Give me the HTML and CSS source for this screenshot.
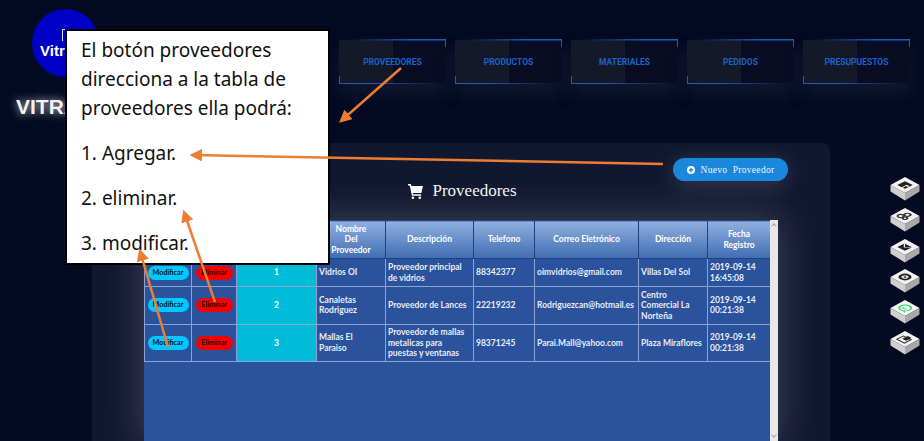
FILE: index.html
```html
<!DOCTYPE html>
<html lang="es">
<head>
    <meta charset="UTF-8">
    <meta name="viewport" content="width=device-width, initial-scale=1.0">
    <title>Proveedores</title>
    <link rel="stylesheet" href="styles.css">
</head>
<body>
    <header class="top">
      <div class="brand">
        <div class="logo"><span>Vitrales</span></div>
        <div class="brand-name">VITRALES</div>
      </div>
      <nav class="menu">
        <a class="menu-item">PROVEEDORES</a>
        <a class="menu-item">PRODUCTOS</a>
        <a class="menu-item">MATERIALES</a>
        <a class="menu-item">PEDIDOS</a>
        <a class="menu-item">PRESUPUESTOS</a>
      </nav>
    </header>

    <main class="content">
      <section class="panel">
        <button class="btn-new">
          <svg class="btn-icon" viewBox="0 0 10 10"><circle cx="5" cy="5" r="5" fill="#fff"/><path d="M5 2.2v5.6M2.2 5h5.6" stroke="#1a86dc" stroke-width="1.7"/></svg>
          Nuevo&nbsp; Proveedor
        </button>
        <h2 class="panel-title">
          <svg class="cart" viewBox="0 0 16 16"><path d="M0 0h3l.6 2H16l-1.8 7.5H5.2l.4 1.500H14v1.600H4.200L1.800 1.600H0z" fill="#fff"/><circle cx="5.200" cy="14.600" r="1.400" fill="#fff"/><circle cx="12.600" cy="14.600" r="1.400" fill="#fff"/></svg>
          Proveedores
        </h2>
        <div class="table-wrap">
          <table class="grid">
            <thead>
              <tr>
                <th class="c1"></th>
                <th class="c2"></th>
                <th class="c3">Id</th>
                <th class="c4">Nombre<br>Del<br>Proveedor</th>
                <th class="c5">Descripción</th>
                <th class="c6">Telefono</th>
                <th class="c7">Correo Eletrónico</th>
                <th class="c8">Dirección</th>
                <th class="c9">Fecha<br>Registro</th>
              </tr>
            </thead>
            <tbody>
              <tr class="row-a">
                <td class="act"><span class="pill pill-edit">Modificar</span></td>
                <td class="act"><span class="pill pill-del">Eliminar</span></td>
                <td class="num">1</td>
                <td>Vidrios OI</td>
                <td>Proveedor principal de vidrios</td>
                <td>88342377</td>
                <td>oimvidrios@gmail.com</td>
                <td>Villas Del Sol</td>
                <td>2019-09-14 16:45:08</td>
              </tr>
              <tr class="row-b">
                <td class="act"><span class="pill pill-edit">Modificar</span></td>
                <td class="act"><span class="pill pill-del">Eliminar</span></td>
                <td class="num">2</td>
                <td>Canaletas<br>Rodriguez</td>
                <td>Proveedor de Lances</td>
                <td>22219232</td>
                <td>Rodriguezcan@hotmail.es</td>
                <td>Centro Comercial La Norteña</td>
                <td>2019-09-14 00:21:38</td>
              </tr>
              <tr class="row-b">
                <td class="act"><span class="pill pill-edit">Modificar</span></td>
                <td class="act"><span class="pill pill-del">Eliminar</span></td>
                <td class="num">3</td>
                <td>Mallas El<br>Paraiso</td>
                <td>Proveedor de mallas metalicas para puestas y ventanas</td>
                <td>98371245</td>
                <td>Parai.Mall@yahoo.com</td>
                <td>Plaza Miraflores</td>
                <td>2019-09-14 00:21:38</td>
              </tr>
            </tbody>
          </table>
          <div class="scrollbar"><span class="arrow-up"></span><span class="arrow-down"></span></div>
        </div>
      </section>

      <aside class="social">
        <svg class="block" viewBox="0 0 30 24"><use href="#cube"/><g transform="matrix(1.1 .55 -1.1 .55 15 2.500)"><path d="M1.500 1.500h7v7h-2v-3h1.500V4H5.500v4.500h-4z" fill="#222"/></g></svg>
        <svg class="block" viewBox="0 0 30 24"><use href="#cube"/><g transform="matrix(1.1 .55 -1.1 .55 15 2.500)" fill="none" stroke="#333" stroke-width="1.300"><circle cx="3" cy="7" r="2"/><circle cx="7" cy="7" r="1.500"/><circle cx="5" cy="2.800" r="2"/></g></svg>
        <svg class="block" viewBox="0 0 30 24"><use href="#cube"/><g transform="matrix(1.1 .55 -1.1 .55 15 2.500)"><path d="M1.500 2h7v6.500h-7z" fill="#222"/><path d="M1.500 2 5 5.500 8.500 2" fill="none" stroke="#eee" stroke-width=".8"/></g></svg>
        <svg class="block" viewBox="0 0 30 24"><use href="#cube"/><g transform="matrix(1.1 .55 -1.1 .55 15 2.500)"><circle cx="5" cy="5" r="4.200" fill="#222"/><circle cx="5" cy="5" r="2.200" fill="#eee"/><circle cx="5" cy="5" r="1" fill="#222"/></g></svg>
        <svg class="block" viewBox="0 0 30 24"><use href="#cube"/><g transform="matrix(1.1 .55 -1.1 .55 15 2.500)"><circle cx="5" cy="4.800" r="3.800" fill="none" stroke="#2fd46f" stroke-width="1.200"/><path d="M7.500 7.500l2 2-3-.8z" fill="#2fd46f"/><path d="M3.200 5.500q1.800 1.500 3.400-.4" fill="none" stroke="#2fd46f" stroke-width=".9"/></g></svg>
        <svg class="block" viewBox="0 0 30 24"><use href="#cube"/><g transform="matrix(1.1 .55 -1.1 .55 15 2.500)"><path d="M1.500 3h7v6h-7z" fill="none" stroke="#333" stroke-width="1"/><path d="M3.500 1h3.500v5H3.500z" fill="#222"/></g></svg>
      </aside>
    </main>

    <svg class="defs" width="0" height="0">
      <defs>
        <g id="cube">
          <path d="M15 0 29.500 8 15 16 .5 8z" fill="#f2f2f2"/>
          <path d="M.5 8v6.500L15 23.500V16z" fill="#cfcfcf"/>
          <path d="M29.500 8v6.500L15 23.500V16z" fill="#a8a8a8"/>
        </g>
      </defs>
    </svg>

    <!-- nota encima de la pagina -->
    <div class="note">
      <p>El botón proveedores direcciona a la tabla de proveedores ella podrá:</p>
      <p>1. Agregar.</p>
      <p>2. eliminar.</p>
      <p>3. modificar.</p>
    </div>

    <svg class="arrows" viewBox="0 0 924 441">
      <defs>
        <marker id="head" markerWidth="5" markerHeight="5" refX="4" refY="2.500" orient="auto">
          <path d="M0 0 5 2.500 0 5z" fill="#ed7d31"/>
        </marker>
      </defs>
      <line x1="401" y1="68" x2="341" y2="121" marker-end="url(#head)"/>
      <line x1="663" y1="164" x2="192" y2="155" marker-end="url(#head)"/>
      <line x1="215" y1="302" x2="184" y2="212" marker-end="url(#head)"/>
      <line x1="168" y1="347" x2="140" y2="251" marker-end="url(#head)"/>
    </svg>
</body>
</html>
```
FILE: styles.css
```css
*{
  padding: 0;
  margin: 0;
  box-sizing: border-box;
}

body {
  width: 924px;
  height: 441px;
  overflow: hidden;
  position: relative;
  background-color: #040a22;
  font-family: "Liberation Serif", serif;
}

/*styling for top bar*/
.top {
  display: flex;
  height: 143px;
}

.brand {
  width: 339px;
  padding: 9px 0 0 16px;
}

.logo {
  position: relative;
  width: 67px;
  height: 68px;
  margin-left: 16px;
  border-radius: 50%;
  background-color: #0000c6;
  display: flex;
  align-items: center;
  padding: 14px 0 0 8px;
  overflow: hidden;
}

/*small white mark on top of the logo*/
.logo::before {
  content: "";
  position: absolute;
  left: 30px;
  top: 20px;
  width: 3px;
  height: 11px;
  border-left: 1px solid #dcdcff;
  border-top: 1px solid #dcdcff;
}

.logo span {
  color: #fff;
  font-family: "Liberation Sans", sans-serif;
  font-weight: 700;
  font-size: 15px;
}

.brand-name {
  margin-top: 18px;
  color: #f2f2f2;
  font-family: "Liberation Sans", sans-serif;
  font-weight: 700;
  font-size: 21px;
  text-shadow: 0 0 8px rgba(255, 255, 255, 0.8);
}

.menu {
  display: flex;
  gap: 9px;
  padding-top: 40px;
  height: 83px;
}

.menu-item {
  position: relative;
  width: 107px;
  height: 43px;
  display: flex;
  align-items: center;
  justify-content: center;
  background: linear-gradient(90deg, #141829 50%, #090c22 50%);
  box-shadow: 0 10px 18px rgba(50, 55, 80, 0.3);
  color: #1d62c6;
  font-family: Roboto, sans-serif;
  font-weight: 700;
  font-size: 8.5px;
}

/*corner brackets of the menu*/
.menu-item::before,
.menu-item::after {
  content: "";
  position: absolute;
  left: 0;
  right: 0;
  height: 8px;
  border: 0 solid #1a5cc0;
  background-repeat: no-repeat;
  background-size: 100% 1.5px;
}

.menu-item::before {
  top: -1px;
  border-right-width: 1.5px;
  background-image: linear-gradient(90deg, transparent 10%, #1a5cc0 70%);
  background-position: top;
}

.menu-item::after {
  bottom: -1px;
  border-left-width: 1.5px;
  background-image: linear-gradient(90deg, #1a5cc0 30%, transparent 90%);
  background-position: bottom;
}

/*styling for main content*/
.content {
  display: flex;
  padding-left: 92px;
  height: 298px;
}

.panel {
  width: 738px;
  padding: 15px 52px 0;
  border-radius: 8px 8px 0 0;
  background-color: #111730;
  display: flex;
  flex-direction: column;
}

.btn-new {
  align-self: flex-end;
  width: 115px;
  height: 23px;
  margin-right: -10px;
  border: none;
  border-radius: 12px;
  background-color: #1a86dc;
  color: #eef4fb;
  font-family: "Liberation Serif", serif;
  font-size: 9.5px;
  letter-spacing: 0.3px;
  display: flex;
  align-items: center;
  justify-content: center;
  gap: 6px;
  box-shadow: 0 4px 22px rgba(255, 255, 255, 0.16);
}

.btn-icon {
  width: 8px;
  height: 8px;
}

.panel-title {
  display: flex;
  align-items: center;
  justify-content: center;
  gap: 9px;
  height: 20px;
  padding-left: 3px;
  color: #f4f4f4;
  font-weight: 400;
  font-size: 17px;
}

.cart {
  width: 15px;
  height: 15px;
}

.table-wrap {
  position: relative;
  margin-top: 19px;
  width: 634px;
  height: 221px;
  padding-right: 8px;
  background-color: #2b529c;
  box-shadow: 0 0 36px 4px rgba(255, 255, 255, 0.18);
}

/*styling for table*/
.grid {
  width: 626px;
  table-layout: fixed;
  border-collapse: collapse;
  font-family: Lato, sans-serif;
  font-size: 8.5px;
  font-weight: 700;
  line-height: 10.5px;
  color: #e8edf6;
}

.grid th {
  height: 38px;
  border: 1px solid #1f4480;
  background: linear-gradient(#8fb0de, #3f6db2);
  color: #fff;
  text-align: center;
}

.grid td {
  border: 1px solid #8ba3d4;
  padding: 0 2px;
  vertical-align: middle;
}

.row-a { height: 28px; }
.row-b { height: 37.5px; }

.c1 { width: 47px; }
.c2 { width: 45px; }
.c3 { width: 80px; }
.c4 { width: 69px; }
.c5 { width: 88px; }
.c6 { width: 61px; }
.c7 { width: 104px; }
.c8 { width: 69px; }
.c9 { width: 63px; }

.grid .num {
  background-color: #00bcd8;
  color: #fff;
  text-align: center;
}

.grid .act { text-align: center; }

.pill {
  display: inline-block;
  height: 14px;
  line-height: 14px;
  border-radius: 7px;
  color: #111;
  font-weight: 700;
  font-size: 7.2px;
}

.pill-edit {
  width: 41px;
  background-color: #00c8ff;
}

.pill-del {
  width: 37px;
  background-color: #f80000;
}

.scrollbar {
  position: absolute;
  top: 0;
  right: 0;
  width: 8px;
  height: 100%;
  background-color: #e8e8e8;
}

.arrow-up,
.arrow-down {
  position: absolute;
  left: 2px;
  width: 4px;
  height: 4px;
  border: 0 solid #a5a5a5;
  border-width: 1px 0 0 1px;
}

.arrow-up {
  top: 4px;
  transform: rotate(45deg);
}

.arrow-down {
  bottom: 4px;
  transform: rotate(225deg);
}

/*social blocks on the right*/
.social {
  margin: 34px 0 0 60px;
  display: flex;
  flex-direction: column;
  gap: 6.8px;
}

.block {
  width: 30px;
  height: 24px;
  display: block;
}

.defs { position: absolute; }

/*note and arrows painted over the page*/
.note {
  position: absolute;
  left: 65px;
  top: 29px;
  width: 265px;
  height: 236px;
  padding: 5px 14px;
  background-color: #fff;
  border: 2px solid #000;
  color: #111;
  font-family: "Noto Sans", sans-serif;
  font-size: 19px;
  line-height: 29px;
}

.note p { margin-bottom: 16px; }

.arrows {
  position: absolute;
  top: 0;
  left: 0;
  width: 924px;
  height: 441px;
  pointer-events: none;
}

.arrows line {
  stroke: #ed7d31;
  stroke-width: 2.5;
}
```
